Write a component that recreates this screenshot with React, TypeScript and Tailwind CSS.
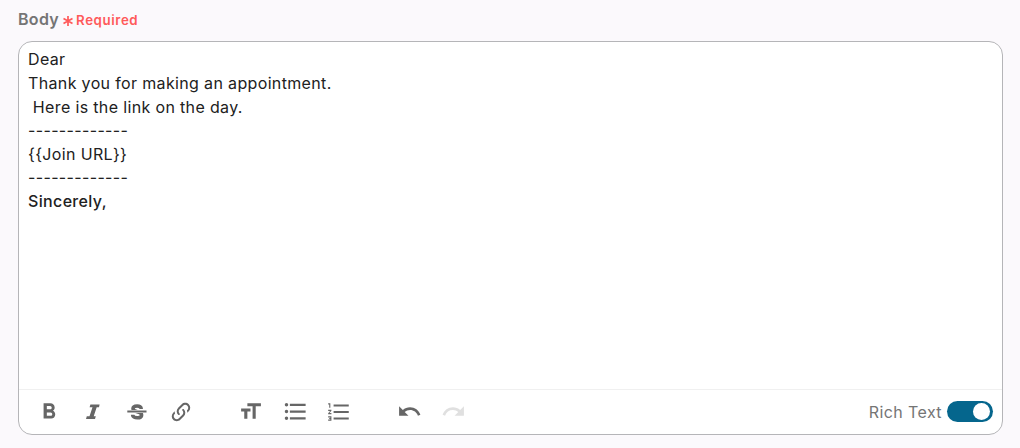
import type { ReactNode } from 'react';
import { MdFormatBold, MdFormatListBulleted, MdFormatListNumbered, MdFormatSize, MdRedo, MdUndo } from 'react-icons/md';

interface ToolButtonProps {
  label: string;
  disabled?: boolean;
  children: ReactNode;
}

function ToolButton({ label, disabled, children }: ToolButtonProps) {
  return (
    <button
      type="button"
      aria-label={label}
      disabled={disabled}
      className="flex h-6 w-6 items-center justify-center text-[#666] disabled:text-[#e0e0e0] [&>svg]:shrink-0"
    >
      {children}
    </button>
  );
}

function ItalicIcon() {
  return (
    <svg viewBox="0 0 24 24" className="h-6 w-6" fill="currentColor">
      <path d="M9.4 4.4H18.6L18 7.2H15.7L12.7 16.2H14.8L14 19H5L5.8 16.2H8.5L11.5 7.2H8.6Z" />
    </svg>
  );
}

function StrikethroughIcon() {
  return (
    <svg viewBox="0 0 24 24" className="h-6 w-6" fill="none" stroke="currentColor">
      <path d="M16.2 8.9C16.2 6.9 14.6 6 12.2 6S8 6.9 8 8.7c0 3.9 8.6 2.3 8.6 6.2 0 1.9-1.7 2.9-4.3 2.9S7.6 16.8 7.6 14.8" strokeWidth="3.6" />
      <path d="M2 11.6h20" stroke="white" strokeWidth="3" />
      <path d="M2.3 11.6h19.2" strokeWidth="2" />
    </svg>
  );
}

function LinkIcon() {
  return (
    <svg viewBox="0 0 24 24" className="h-6 w-6" fill="currentColor">
      <path d="M10.59,13.41C11,13.8 11,14.44 10.59,14.83C10.2,15.22 9.56,15.22 9.17,14.83C7.22,12.88 7.22,9.71 9.17,7.76V7.76L12.71,4.22C14.66,2.27 17.83,2.27 19.78,4.22C21.73,6.17 21.73,9.34 19.78,11.29L18.29,12.78C18.3,11.96 18.17,11.14 17.89,10.36L18.36,9.88C19.54,8.71 19.54,6.81 18.36,5.64C17.19,4.46 15.29,4.46 14.12,5.64L10.59,9.17C9.41,10.34 9.41,12.24 10.59,13.41M13.41,9.17C13.8,8.78 14.44,8.78 14.83,9.17C16.78,11.12 16.78,14.29 14.83,16.24V16.24L11.29,19.78C9.34,21.73 6.17,21.73 4.22,19.78C2.27,17.83 2.27,14.66 4.22,12.71L5.71,11.22C5.7,12.04 5.83,12.86 6.11,13.65L5.64,14.12C4.46,15.29 4.46,17.19 5.64,18.36C6.81,19.54 8.71,19.54 9.88,18.36L13.41,14.83C14.59,13.66 14.59,11.76 13.41,10.59C13,10.2 13,9.56 13.41,9.17Z" />
    </svg>
  );
}

function Toolbar() {
  return (
    <div className="flex h-[45px] items-center border-t border-[#f0f0f0] pb-px pl-[17.5px] pr-[9px]">
      <div className="flex gap-[20.2px]">
        <ToolButton label="Bold"><MdFormatBold size={26} /></ToolButton>
        <ToolButton label="Italic"><ItalicIcon /></ToolButton>
        <ToolButton label="Strikethrough"><StrikethroughIcon /></ToolButton>
        <ToolButton label="Link"><LinkIcon /></ToolButton>
      </div>
      <div className="ml-[45px] flex gap-5">
        <ToolButton label="Text size"><MdFormatSize size={25} /></ToolButton>
        <ToolButton label="Bulleted list"><MdFormatListBulleted size={27} className="translate-x-px" /></ToolButton>
        <ToolButton label="Numbered list"><MdFormatListNumbered size={26} className="translate-x-px" /></ToolButton>
      </div>
      <div className="ml-[47px] flex gap-5">
        <ToolButton label="Undo"><MdUndo size={25} /></ToolButton>
        <ToolButton label="Redo" disabled><MdRedo size={25} /></ToolButton>
      </div>
      <div className="ml-auto flex items-center gap-[5px]">
        <span className="text-[16px] leading-6 tracking-[0.4px] text-[#757575]">Rich Text</span>
        <button type="button" role="switch" aria-checked="true" aria-label="Rich Text" className="flex h-[21px] w-[46px] items-center justify-end rounded-full bg-[#05668d] pr-[3px]">
          <span className="h-[17px] w-[17px] rounded-full bg-white" />
        </button>
      </div>
    </div>
  );
}

export default function App() {
  return (
    <div className="h-[448px] w-[1020px] bg-[#fbf9fc] px-[18px] pt-2 font-['Inter',sans-serif]">
      <div className="flex h-[33px] items-start">
        <span className="text-[16px] font-semibold leading-[23px] tracking-[0.3px] text-[#757575]">Body</span>
        <svg viewBox="0 0 12 12" className="ml-[3px] mt-[7px] h-3 w-3 text-[#ff5a5a]" stroke="currentColor" strokeWidth="1.7">
          <path d="M6 1v10M1.5 3.5l9 5M10.5 3.5l-9 5" />
        </svg>
        <span className="ml-[2px] text-[13.3px] font-semibold leading-6 tracking-[0.6px] text-[#ff5a5a]">Required</span>
      </div>
      <div className="flex h-[394px] w-[985px] flex-col overflow-hidden rounded-[14px] border border-[#b5b5b8] bg-white">
        <div className="flex-1 whitespace-pre px-[9px] pt-[6.3px] text-[16px] leading-[23.62px] tracking-[0.35px] text-[#212121]">
          <p>Dear</p>
          <p>Thank you for making an appointment.</p>
          <p> Here is the link on the day.</p>
          <p>-------------</p>
          <p>{'{{Join URL}}'}</p>
          <p>-------------</p>
          <p className="font-medium">Sincerely,</p>
        </div>
        <Toolbar />
      </div>
    </div>
  );
}
